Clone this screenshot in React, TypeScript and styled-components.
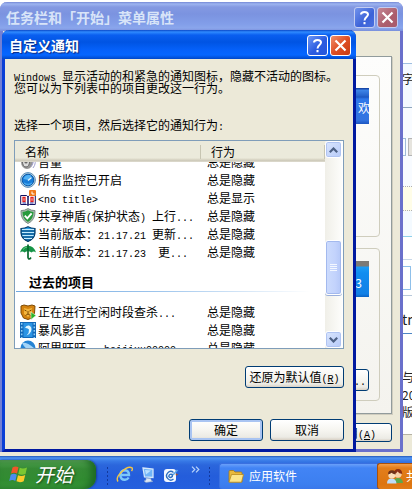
import React from 'react';
import styled, { createGlobalStyle, css } from 'styled-components';

const GlobalStyle = createGlobalStyle`
  * { box-sizing: border-box; }
  body {
    margin: 0;
    font-family: "Noto Sans CJK SC", "Liberation Sans", sans-serif;
    font-size: 12px;
    line-height: 12px;
    color: #000;
    overflow: hidden;
  }
  button { font: inherit; color: inherit; margin: 0; padding: 0; cursor: default; }
`;

const Screen = styled.div`
  display: flex;
  flex-direction: column;
  height: 100vh;
  overflow: hidden;
`;

const Desktop = styled.main`
  position: relative;
  flex: 1;
  overflow: hidden;
  background: #ece9d8;
`;

/* Web page behind the windows */
const BrowserPage = styled.div`
  display: flex;
  flex-direction: column;
  align-items: stretch;
  margin-bottom: 21px;
  height: calc(100% - 21px);
  background: #fff;
  border-bottom: 1px solid #b5b2a4;
`;

const PageBand = styled.div<{ $h: number; $top?: number; $bg?: string; $line?: string; $dotted?: boolean }>`
  display: flex;
  justify-content: flex-end;
  align-items: ${(p) => (p.$top ? 'flex-start' : 'center')};
  flex: none;
  height: ${(p) => p.$h}px;
  padding-top: ${(p) => p.$top || 0}px;
  background: ${(p) => p.$bg || '#fff'};
  border-bottom: 1px ${(p) => (p.$dotted ? 'dotted' : 'solid')} ${(p) => p.$line || 'transparent'};
  overflow: hidden;
`;

const PageText = styled.span<{ $size?: number; $color?: string }>`
  flex: none;
  width: 10px;
  overflow: hidden;
  white-space: nowrap;
  font-size: ${(p) => p.$size || 12}px;
  line-height: 18px;
  color: ${(p) => p.$color || '#222'};
`;

const PageField = styled.span`
  width: 60px;
  height: 24px;
  margin-right: 1px;
  border: 1px solid #8fc0ea;
  background: #fff;
`;

const PageTool = styled.span`
  width: 4px;
  height: 18px;
  border: 1px solid #9dbbd8;
  border-left: 0;
  & + & { border: 1px solid #b4b4b4; background: #e6e4de; margin-left: 2px; border-right: 0; }
`;

/* Windows */
const windowFrame = css<{ $active?: boolean }>`
  position: absolute;
  display: flex;
  flex-direction: column;
  border: 3px solid ${(p) => (p.$active ? '#0a3fd6' : '#7280d4')};
  border-top: 0;
  border-right-color: ${(p) => (p.$active ? '#0019a0' : '#6a70cb')};
  border-bottom-color: ${(p) => (p.$active ? '#0019a0' : '#6a70cb')};
  border-radius: 7px 7px 0 0;
  background: #ece9d8;
`;

const BackWindow = styled.section`
  ${windowFrame}
  top: 2px;
  left: 0;
  right: 9px;
  bottom: 4px;
`;

const FrontWindow = styled.section`
  ${windowFrame}
  top: 30px;
  left: 2px;
  right: 56px;
`;

const TitleBar = styled.header<{ $active?: boolean }>`
  display: flex;
  align-items: center;
  gap: 2px;
  height: 29px;
  flex: none;
  margin: 0 -3px;
  padding: 1px 5px 0 ${(p) => (p.$active ? 7 : 6)}px;
  border-radius: 7px 7px 0 0;
  background: ${(p) =>
    p.$active
      ? 'linear-gradient(#0a48c8 0, #2f8bff 2px, #0a5ff0 5px, #0054e3 12px, #0561fa 20px, #0566ff 25px, #0047c8 29px)'
      : 'linear-gradient(#7488d6 0, #9db4f0 2px, #8499e2 5px, #7b93e0 12px, #829ee9 22px, #8aa6ec 26px, #7a8fdc 29px)'};
`;

const Title = styled.h1<{ $active?: boolean }>`
  flex: 1;
  margin: 0;
  font-size: 14px;
  line-height: 20px;
  font-weight: 700;
  white-space: nowrap;
  color: ${(p) => (p.$active ? '#fff' : '#d8e4f8')};
  text-shadow: ${(p) => (p.$active ? '1px 1px 1px #0b2a80' : 'none')};
`;

const CaptionButton = styled.button<{ $tone: 'blue' | 'red'; $dim?: boolean }>`
  display: grid;
  place-items: center;
  width: 21px;
  height: 21px;
  border: 1px solid ${(p) => (p.$dim ? '#c3cdf2' : '#fff')};
  border-radius: 3px;
  background: ${(p) =>
    p.$tone === 'blue'
      ? p.$dim
        ? 'linear-gradient(135deg, #7193ec, #3c62d8 60%, #4a70e0)'
        : 'linear-gradient(135deg, #6d97f5, #2a5be0 55%, #2558dc)'
      : p.$dim
        ? 'linear-gradient(135deg, #c58795, #ac5d6c 60%, #a85a6c)'
        : 'linear-gradient(135deg, #f0906c, #df4f25 50%, #c83c12)'};
`;

const BackBody = styled.div`
  display: flex;
  flex-direction: column;
  flex: 1;
  align-items: flex-end;
  padding: 25px 8px 7px;
`;

const TabPanel = styled.div`
  display: flex;
  flex-direction: column;
  gap: 11px;
  align-self: stretch;
  flex: 1;
  padding: 18px 11px 12px;
  border: 1px solid #919b9c;
  box-shadow: 1px 1px 0 #d0cdbf;
  background: linear-gradient(#fdfdfc, #f4f3ee);
`;

const GroupBox = styled.div<{ $grow: number }>`
  display: flex;
  flex-direction: column;
  justify-content: space-between;
  flex: ${(p) => p.$grow} 0 0;
  padding: 12px 10px 9px;
  border: 1px solid #cfcdbd;
  border-radius: 4px;
`;

const Banner = styled.div<{ $dark?: boolean }>`
  display: flex;
  justify-content: flex-end;
  align-items: center;
  height: 36px;
  padding-top: ${(p) => (p.$dark ? 8 : 4)}px;
  padding-right: ${(p) => (p.$dark ? 7 : 0)}px;
  color: #fff;
  overflow: hidden;
  background: ${(p) =>
    p.$dark
      ? 'linear-gradient(#7c7a76 0 5px, #1c9cf5 6px, #118df0 12px, #1280e6 33px, #0b62c4 36px)'
      : 'linear-gradient(#1747a8 0 1px, #3f86e8 2px, #2563cc 8px, #1c56c0 9px, #2e78ea 11px, #3273e0 32px, #1c55c0 36px)'};
`;

const ClippedGlyph = styled.span`
  width: 11px;
  overflow: hidden;
  white-space: nowrap;
  line-height: 16px;
`;

const Latin = styled.span`
  font-family: "Liberation Mono", monospace;
  font-size: 10px;
  line-height: 0;
  white-space: pre;
`;

const PushButton = styled.button<{ $w: number; $primary?: boolean }>`
  width: ${(p) => p.$w}px;
  height: 22px;
  flex: none;
  border: 1px solid #003c74;
  border-radius: 3px;
  background: linear-gradient(#fff, #f6f5f0 50%, #ecebe5 85%, #d8d0c4);
  line-height: 18px;
  white-space: nowrap;
  ${(p) => p.$primary && css`box-shadow: inset 0 0 0 2px #a9c4f2;`}
`;

const ApplyButton = styled(PushButton)`
  height: 19px;
  margin-top: 9px;
  text-align: right;
  padding-right: 15px;
  line-height: 16px;
`;

const MoreButton = styled(PushButton)`
  align-self: flex-end;
  text-align: right;
  padding-right: 2px;
`;

const Client = styled.div`
  display: flex;
  flex-direction: column;
  padding: 11px 9px 8px;
`;

const Intro = styled.p`
  margin: 0 0 25px;
  white-space: nowrap;
`;

const Prompt = styled.p`
  margin: 0 0 9px;
`;

const ListBox = styled.div`
  display: flex;
  border: 1px solid #7f9db9;
  padding-right: 1px;
  background: #fff;
`;

const ItemTable = styled.table`
  flex: 1;
  min-width: 0;
  border-collapse: collapse;
  table-layout: fixed;
  th, td { padding: 0; text-align: left; font-weight: 400; }
`;

const HeadCell = styled.th<{ $w?: number }>`
  width: ${(p) => (p.$w ? `${p.$w}px` : 'auto')};
  height: 21px;
  background: linear-gradient(#ebeadb 0 17px, #dedbca 18px, #cbc7b8 20px, #e8e6da 21px);
`;

const HeadLabel = styled.div`
  height: 14px;
  padding-left: 10px;
  line-height: 14px;
  border-right: 1px solid #c7c5b2;
`;

const CellBox = styled.div<{ $clip?: 'top' | 'bottom'; $inset: number }>`
  display: flex;
  align-items: ${(p) => (p.$clip === 'top' ? 'flex-end' : p.$clip === 'bottom' ? 'flex-start' : 'center')};
  gap: 2px;
  height: ${(p) => (p.$clip ? 9 : 18)}px;
  padding-left: ${(p) => p.$inset}px;
  overflow: hidden;
  white-space: nowrap;
  line-height: 18px;
  svg { flex: none; margin: 1px 0; }
`;

const GroupTitle = styled.div`
  height: 42px;
  padding: 12px 0 0 14px;
  font-size: 13px;
  line-height: 18px;
  font-weight: 700;
  background: linear-gradient(90deg, #70a8e0, #9cc4ec 45%, #fff 95%) 1px 30px / 100% 1px no-repeat;
`;

const ScrollBar = styled.div`
  display: flex;
  flex-direction: column;
  width: 17px;
  background: linear-gradient(90deg, #f0efe8, #fdfdfb);
`;

const ScrollButton = styled.button`
  display: grid;
  place-items: center;
  height: 17px;
  border: 1px solid #fff;
  border-radius: 3px;
  box-shadow: inset 0 0 0 1px #b0c4f2;
  background: linear-gradient(135deg, #d9e5fd, #b7cbf9);
`;

const ScrollTrack = styled.div`
  flex: 1;
  padding-top: 82px;
`;

const ScrollThumb = styled.div`
  display: grid;
  place-items: center;
  height: 55px;
  border: 1px solid #fff;
  border-radius: 3px;
  box-shadow: inset 0 0 0 1px #a3b9ee, 0 1px 0 #9bb0dc;
  background: linear-gradient(90deg, #cddcfd, #c3d3fc 60%, #b5c8f8);
`;

const ButtonRow = styled.div<{ $top: number }>`
  display: flex;
  justify-content: flex-end;
  gap: 7px;
  margin-top: ${(p) => p.$top}px;
`;

/* Taskbar */
const Taskbar = styled.footer`
  display: flex;
  align-items: stretch;
  height: 33px;
  flex: none;
  padding-top: 4px;
  background: linear-gradient(#2358b8 0, #4f94f4 2px, #3779e6 5px, #2b66dc 9px, #245ddb 20px, #2560de 33px);
  color: #fff;
`;

const StartButton = styled.button`
  display: flex;
  align-items: center;
  gap: 7px;
  width: 96px;
  flex: none;
  padding: 0 0 2px 9px;
  border: 0;
  border-radius: 0 9px 12px 0;
  background: linear-gradient(#6fae6c 0, #4a9c49 3px, #358a35 9px, #318c31 20px, #3a9a3a 29px);
  box-shadow: inset -5px 0 7px #1e6a24, 1px 0 2px #163e9a;
  color: #fff;
  font-size: 19px;
  font-style: italic;
  line-height: 24px;
  text-shadow: 1px 1px 2px #1a4a1a;
`;

const Grip = styled.span`
  width: 5px;
  margin: 6px 0 3px;
  align-self: stretch;
  background: radial-gradient(circle, #12389c 1px, transparent 1px) 0 0 / 5px 4px;
`;

const QuickLaunch = styled.nav`
  display: flex;
  align-items: center;
  gap: 6px;
  flex: none;
  padding: 0 7px 0 9px;
`;

const IconButton = styled.button`
  display: grid;
  place-items: center;
  width: 17px;
  height: 20px;
  border: 0;
  background: none;
`;

const MoreMark = styled.button`
  align-self: flex-start;
  width: 11px;
  height: 16px;
  border: 0;
  background: none;
  margin-left: 5px;
`;

const TaskButton = styled.button<{ $alert?: boolean }>`
  display: flex;
  align-items: center;
  gap: ${(p) => (p.$alert ? 3 : 5)}px;
  flex: ${(p) => (p.$alert ? 'none' : '1')};
  width: ${(p) => (p.$alert ? '35px' : 'auto')};
  margin: 3px 0 0;
  padding: 0 0 2px ${(p) => (p.$alert ? 9 : 8)}px;
  border: 1px solid ${(p) => (p.$alert ? '#a8500c' : '#3a70e0')};
  border-right: 0;
  border-bottom: 0;
  border-radius: 3px 0 0 3px;
  overflow: hidden;
  white-space: nowrap;
  line-height: 16px;
  color: #fff;
  svg { flex: none; }
  background: ${(p) =>
    p.$alert
      ? 'linear-gradient(#f4a04c 0, #e37e1c 4px, #dd7510 20px, #e07c18)'
      : 'linear-gradient(#6aa0fa 0, #4284f5 4px, #3c7ff0 20px, #3a78ea)'};
`;

const HelpGlyph = () => (
  <svg width="13" height="15" viewBox="0 0 13 15" fill="none" stroke="#fff" strokeWidth="2">
    <path d="M3 4.5C3 1 10 1 10 4.5C10 7 6.5 7 6.5 10.5M6.5 12v2.2" />
  </svg>
);

const CloseGlyph = () => (
  <svg width="13" height="13" viewBox="0 0 13 13" stroke="#fff" strokeWidth="2.2">
    <path d="M1.5 1.5l10 10M11.5 1.5l-10 10" />
  </svg>
);

const Chevron = ({ up }: { up?: boolean }) => (
  <svg width="9" height="6" viewBox="0 0 9 6" fill="none" stroke="#4d6185" strokeWidth="2.2">
    <path d={up ? 'M.8 5.2L4.5 1.5L8.2 5.2' : 'M.8 .8L4.5 4.5L8.2 .8'} />
  </svg>
);

const iconBox = { width: 16, height: 16, viewBox: '0 0 16 16' };

const VolumeIcon = () => (
  <svg {...iconBox}>
    <ellipse cx="7" cy="8" rx="6" ry="7" fill="#969696" />
    <ellipse cx="6" cy="8" rx="3.5" ry="5" fill="#ddd" stroke="#666" />
    <circle cx="6" cy="8" r="1.6" fill="#666" />
    <path d="M12 3.5q3 4.5-1 9M14 3q3 6-1 11" fill="none" stroke="#a0a0cf" />
  </svg>
);
const MonitorIcon = () => (
  <svg {...iconBox}>
    <circle cx="8" cy="8" r="7.4" fill="#b4cfe2" stroke="#5b8fb8" />
    <circle cx="8" cy="8" r="5.8" fill="#167cd8" stroke="#0b5aa8" />
    <path d="M3.5 7a5 5 0 0 1 8-3L8 8z" fill="#52b2f4" />
    <path d="M8 8.5l3.500-3" stroke="#e4f8ff" strokeWidth="1.4" />
    <path d="M4 11q4 3 8 0" fill="none" stroke="#45a7ef" strokeWidth="1.5" />
  </svg>
);
const BookIcon = () => (
  <svg {...iconBox}>
    <path d="M.7 5.5h6L8 7l1.300-1.500h6v9h-6L8 15.500 6.700 14.500h-6z" fill="#fff" stroke="#101060" />
    <path d="M8 7v8" stroke="#101060" strokeWidth="1.500" />
    <path d="M3 7.500h2v4H3zM11 7.500h2v4h-2z" fill="none" stroke="#e02020" strokeWidth="1.300" />
    <path d="M2.500 13h3.500M10 13h3.500" stroke="#3040b0" />
    <rect x="9" y="0" width="7" height="6" rx="1" fill="#f07818" />
    <path d="M12 1.500v2.500h2.500" fill="none" stroke="#fff" />
  </svg>
);
const ShieldIcon = () => (
  <svg {...iconBox}>
    <path d="M8 .6Q11.500 2.800 15 2.600Q15.500 12 8 15.500Q.5 12 1 2.600Q4.500 2.800 8 .6z" fill="#a7b8ac" stroke="#7c8e86" />
    <path d="M8 2.200Q11 4 13.500 4Q13.500 11 8 13.900Q2.500 11 2.500 4Q5 4 8 2.200z" fill="#279a3c" />
    <path d="M4.800 7.700l2.500 2.600 4.300-5" fill="none" stroke="#fff" strokeWidth="1.900" />
  </svg>
);
const GridShieldIcon = () => (
  <svg {...iconBox}>
    <path d="M1 2.500Q5 2.500 8 .8Q11 2.500 15 2.500V7Q14.500 13 8 15.500Q1.500 13 1 7z" fill="#2aa2ea" stroke="#063b68" strokeWidth="1.200" />
    <path d="M2 3.500h12M2 6.500h12M2.500 9.500h11M4 12.500h8" stroke="#c4ecff" />
    <path d="M1 5h14M1 8h14M2.500 11h11M5 14h6" stroke="#063b68" />
  </svg>
);
const UmbrellaIcon = () => (
  <svg {...iconBox}>
    <path d="M0 8.500Q2 2 8 1.700Q14 2 16 8.500Q13.500 6.700 11.500 8.500Q8 6 4.500 8.500Q2.500 6.700 0 8.500z" fill="#169447" />
    <path d="M3 5.500Q5 3 7.500 3" fill="none" stroke="#64c982" />
    <path d="M8 .5V13.500Q8.200 15.300 10 14.800L11 13.500" fill="none" stroke="#08692e" strokeWidth="1.700" />
  </svg>
);
const LionIcon = () => (
  <svg {...iconBox}>
    <path d="M1 2l3-1 4 1 4-1 3 1-.5 7L12 14l-4 1.500L3.500 14 1 9z" fill="#d4830f" stroke="#7d4a04" />
    <path d="M4 4l4 1 4-1v6l-4 3-4-3z" fill="#f3b53c" />
    <path d="M4.500 6l2 1M11.500 6l-2 1M8 7v3M5.500 11.500L8 10l2.500 1.500" fill="none" stroke="#7d4a04" />
    <path d="M11 8l5 3.500-5 4z" fill="#28b428" stroke="#d9f0d9" strokeWidth=".6" />
  </svg>
);
const FilmIcon = () => (
  <svg {...iconBox}>
    <rect width="16" height="16" fill="#1268b8" />
    <path d="M1.700 1v15M14.300 1v15" stroke="#8fd0f8" strokeWidth="1.500" strokeDasharray="1.800 1.700" />
    <rect x="3.500" y="1" width="9" height="14" fill="#2b94e4" />
    <path d="M5 6Q6 3 9 3.500Q12.500 5 11 9.500Q10 12 6.500 13.500Q9.500 10.500 9 7.500Q7.500 5.500 5 6z" fill="#e0f6ff" />
  </svg>
);
const WingIcon = () => (
  <svg {...iconBox}>
    <circle cx="8" cy="8" r="7.500" fill="#2583d4" />
    <path d="M2 3Q7 2 14 8L11 11Q5 9 2 3z" fill="#a4d4f8" />
  </svg>
);

const WindowsFlag = () => (
  <svg width="19" height="18" viewBox="0 0 19 18">
    <path d="M3.500 2.500Q6.500 .5 9.500 2.300L8 8.500Q5 6.800 2 8.600z" fill="#f0562a" />
    <path d="M10.700 2.800Q14 4.500 18 2.600L16.500 8.900Q13 10.500 9.300 9z" fill="#7cc832" />
    <path d="M1.700 9.800Q4.800 8 7.800 9.700L6.300 15.900Q3.300 14.200 .2 16z" fill="#4c8cf0" />
    <path d="M9 10.200Q12.500 11.800 16.200 10L14.700 16.200Q11 18 7.500 16.300z" fill="#fccb2b" />
  </svg>
);
const ExplorerIcon = () => (
  <svg width="17" height="17" viewBox="0 0 17 17" fill="none">
    <path d="M4.500 9H13Q13 4.300 8.800 4.300Q4.500 4.500 4.300 9.500Q5 14 9 13.700Q11.500 13.500 12.700 11.500" stroke="#7cc8fa" strokeWidth="2.400" />
    <path d="M2 15.500Q-.5 12 5 6.500Q12-.5 16 1.800Q17 3 15.500 5" stroke="#f3c545" strokeWidth="1.400" />
  </svg>
);
const DesktopIcon = () => (
  <svg {...iconBox}>
    <path d="M3 1l10 1v8.500L4.500 10z" fill="#70b4f8" stroke="#d4e7fb" strokeWidth="1.300" />
    <path d="M5 3l6 .5-5 4z" fill="#b9e0ff" />
    <path d="M6 11l5 .5V13l2 1.500-7 1-2-1.500 2-1z" fill="#dce6f2" stroke="#7d9dcc" strokeWidth=".6" />
  </svg>
);
const MailIcon = () => (
  <svg {...iconBox}>
    <rect x="1" y="2" width="12" height="13" rx="3" fill="#f4f8ff" />
    <path d="M10.500 5.500A4.200 4.200 0 1 0 10.500 12M9.300 7.500Q6 6.500 5.800 9.500Q7 11.500 9.300 9.500z" fill="none" stroke="#2b6fc0" strokeWidth="1.400" />
    <path d="M10 8l4.500-5" stroke="#5aa7e8" strokeWidth="1.500" />
    <path d="M12.500 6.500l3 .8-2.500 1.500z" fill="#a0522d" />
  </svg>
);
const FolderIcon = () => (
  <svg {...iconBox}>
    <path d="M1 3.500q0-1 1-1h3.500L7 4h6q1 0 1 1v9H1z" fill="#e8b93c" stroke="#a87a14" strokeWidth=".8" />
    <path d="M3.500 6.500H15.500L13.500 14.200H1z" fill="#fbe58a" stroke="#b88a20" strokeWidth=".8" />
  </svg>
);
const PeopleIcon = () => (
  <svg {...iconBox}>
    <path d="M6.500 15q0-5 4.500-5t5 5z" fill="#5ca84c" />
    <circle cx="11" cy="6" r="3.700" fill="#f8d0a6" />
    <path d="M7 6q0-5 4-5t4.300 5Q12 5.500 10.500 3.500Q9.500 5.500 7 6z" fill="#8c2e14" />
    <path d="M0 15.500q0-5 4.500-5t5 5z" fill="#bfdcf8" />
    <circle cx="4.800" cy="7" r="3.500" fill="#fbdcb8" />
    <path d="M1 6.500Q1 2.300 5 2.300T8.500 6.500Q5.500 6 4.500 4.800Q3.500 6 1 6.500z" fill="#6e3018" />
  </svg>
);

type Item = { icon: React.ReactNode; name: React.ReactNode; behavior: string; clip?: 'top' | 'bottom' };

const currentItems: Item[] = [
  { icon: <VolumeIcon />, name: '音量', behavior: '总是隐藏', clip: 'top' },
  { icon: <MonitorIcon />, name: '所有监控已开启', behavior: '总是隐藏' },
  { icon: <BookIcon />, name: <Latin>{'<no title>'}</Latin>, behavior: '总是显示' },
  { icon: <ShieldIcon />, name: <>共享神盾<Latin>(</Latin>保护状态<Latin>{') '}</Latin>上行<Latin>...</Latin></>, behavior: '总是隐藏' },
  { icon: <GridShieldIcon />, name: <>当前版本：<Latin>{'21.17.21 '}</Latin>更新<Latin>...</Latin></>, behavior: '总是隐藏' },
  { icon: <UmbrellaIcon />, name: <>当前版本：<Latin>{'21.17.23  '}</Latin>更<Latin>...</Latin></>, behavior: '总是隐藏' },
];

const pastItems: Item[] = [
  { icon: <LionIcon />, name: <>正在进行空闲时段查杀<Latin>...</Latin></>, behavior: '总是隐藏' },
  { icon: <FilmIcon />, name: '暴风影音', behavior: '总是隐藏' },
  { icon: <WingIcon />, name: <>阿里旺旺<Latin>{' - beijixu00000'}</Latin></>, behavior: '总是隐藏', clip: 'bottom' },
];

const ItemRow = ({ icon, name, behavior, clip }: Item) => (
  <tr>
    <td><CellBox $clip={clip} $inset={5}>{icon}<span>{name}</span></CellBox></td>
    <td><CellBox $clip={clip} $inset={6}>{behavior}</CellBox></td>
  </tr>
);

const CaptionButtons = ({ dim }: { dim?: boolean }) => (
  <>
    <CaptionButton $tone="blue" $dim={dim} aria-label="帮助"><HelpGlyph /></CaptionButton>
    <CaptionButton $tone="red" $dim={dim} aria-label="关闭"><CloseGlyph /></CaptionButton>
  </>
);

export default function App() {
  return (
    <Screen>
      <GlobalStyle />
      <Desktop>
        <BrowserPage>
          <PageBand $h={64} $line="#9fbfe0" />
          <PageBand $h={44} $top={6} $bg="#f4f9ff" $line="#8fa6bd"><PageText>字头</PageText></PageBand>
          <PageBand $h={79} $bg="#f8fbff" $line="#b0b0b0" $dotted><PageTool /><PageTool /></PageBand>
          <PageBand $h={24} $bg="#fffde8" $line="#b0b0b0" $dotted />
          <PageBand $h={26} $bg="#f4faff" $line="#8fd0ea" />
          <PageBand $h={23} $line="#c8d8e8" />
          <PageBand $h={36} $line="#b8c8da"><PageField /></PageBand>
          <PageBand $h={38} $top={14} $line="#4d86c4"><PageText $size={14}>tml</PageText></PageBand>
          <PageBand $h={34} />
          <PageBand $h={18}><PageText>与互</PageText></PageBand>
          <PageBand $h={18}><PageText>20</PageText></PageBand>
          <PageBand $h={16}><PageText>版权</PageText></PageBand>
        </BrowserPage>

        <BackWindow>
          <TitleBar>
            <Title>任务栏和「开始」菜单属性</Title>
            <CaptionButtons dim />
          </TitleBar>
          <BackBody>
            <TabPanel>
              <GroupBox $grow={164}>
                <Banner><ClippedGlyph>欢迎</ClippedGlyph></Banner>
              </GroupBox>
              <GroupBox $grow={153}>
                <Banner $dark><span>3</span></Banner>
                <MoreButton $w={74}><Latin>...</Latin></MoreButton>
              </GroupBox>
            </TabPanel>
            <ApplyButton $w={74}>应用<Latin>(<u>A</u>)</Latin></ApplyButton>
          </BackBody>
        </BackWindow>

        <FrontWindow $active role="dialog" aria-label="自定义通知">
          <TitleBar $active>
            <Title as="h2" $active>自定义通知</Title>
            <CaptionButtons />
          </TitleBar>
          <Client>
            <Intro>
              <Latin>{'Windows '}</Latin>显示活动的和紧急的通知图标，隐藏不活动的图标。<br />
              您可以为下列表中的项目更改这一行为。
            </Intro>
            <Prompt>选择一个项目，然后选择它的通知行为<Latin>:</Latin></Prompt>
            <ListBox>
              <ItemTable>
                <thead>
                  <tr>
                    <HeadCell $w={186}><HeadLabel>名称</HeadLabel></HeadCell>
                    <HeadCell><HeadLabel>行为</HeadLabel></HeadCell>
                  </tr>
                </thead>
                <tbody>
                  {currentItems.map((item, i) => <ItemRow key={i} {...item} />)}
                  <tr><td colSpan={2}><GroupTitle>过去的项目</GroupTitle></td></tr>
                  {pastItems.map((item, i) => <ItemRow key={i} {...item} />)}
                </tbody>
              </ItemTable>
              <ScrollBar>
                <ScrollButton aria-label="向上滚动"><Chevron up /></ScrollButton>
                <ScrollTrack>
                  <ScrollThumb>
                    <svg width="7" height="8" viewBox="0 0 7 8" stroke="#f4f8ff"><path d="M0 .5h7M0 2.500h7M0 4.500h7M0 6.500h7" /></svg>
                  </ScrollThumb>
                </ScrollTrack>
                <ScrollButton aria-label="向下滚动"><Chevron /></ScrollButton>
              </ScrollBar>
            </ListBox>
            <ButtonRow $top={17}>
              <PushButton $w={99}>还原为默认值<Latin>(<u>R</u>)</Latin></PushButton>
            </ButtonRow>
            <ButtonRow $top={31}>
              <PushButton $w={74} $primary>确定</PushButton>
              <PushButton $w={74}>取消</PushButton>
            </ButtonRow>
          </Client>
        </FrontWindow>
      </Desktop>

      <Taskbar>
        <StartButton><WindowsFlag />开始</StartButton>
        <QuickLaunch aria-label="快速启动">
          <Grip />
          <IconButton aria-label="浏览器"><ExplorerIcon /></IconButton>
          <IconButton aria-label="显示桌面"><DesktopIcon /></IconButton>
          <IconButton aria-label="邮件"><MailIcon /></IconButton>
          <MoreMark aria-label="更多">
            <svg width="9" height="7" viewBox="0 0 9 7" fill="none" stroke="#b9d4fb" strokeWidth="1.200"><path d="M1 .7l2.800 2.800L1 6.300M5 .7l2.800 2.800L5 6.300" /></svg>
          </MoreMark>
          <Grip />
        </QuickLaunch>
        <TaskButton><FolderIcon />应用软件</TaskButton>
        <TaskButton $alert><PeopleIcon />共享</TaskButton>
      </Taskbar>
    </Screen>
  );
}
